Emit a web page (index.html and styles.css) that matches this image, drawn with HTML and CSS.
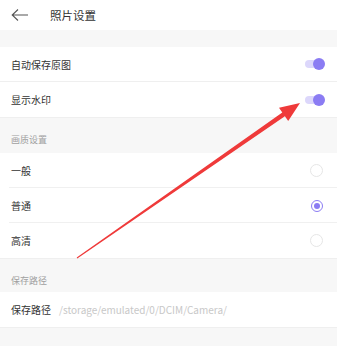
FILE: index.html
```html
<!DOCTYPE html>
<html lang="zh">
<head>
<meta charset="UTF-8">
<meta name="viewport" content="width=device-width, initial-scale=1.0">
<title>照片设置</title>
<link rel="stylesheet" href="styles.css">
</head>
<body>
    <div class="page">
        <div class="header">
            <svg class="back" width="18" height="12" viewBox="0 0 18 12">
                <path d="M17 6 H1 M7 0.5 L1.2 6 L7 11.5" fill="none" stroke="#555" stroke-width="1.1"/>
            </svg>
            <span class="title">照片设置</span>
        </div>
        <div class="gap"></div>
        <div class="group">
            <div class="row line-full">
                <span>自动保存原图</span>
                <span class="toggle"></span>
            </div>
            <div class="row">
                <span>显示水印</span>
                <span class="toggle"></span>
            </div>
        </div>
        <div class="section">画质设置</div>
        <div class="group">
            <div class="row line-inset">
                <span>一般</span>
                <span class="radio"></span>
            </div>
            <div class="row line-inset">
                <span>普通</span>
                <span class="radio checked"></span>
            </div>
            <div class="row">
                <span>高清</span>
                <span class="radio"></span>
            </div>
        </div>
        <div class="section short">保存路径</div>
        <div class="group">
            <div class="row">
                <span>保存路径<span class="path">/storage/emulated/0/DCIM/Camera/</span></span>
            </div>
        </div>
    </div>

    <!-- red annotation arrow -->
    <svg class="arrow" width="346" height="346" viewBox="0 0 346 346">
        <polygon fill="#ef3a3a" points="76.7,257.6 282.3,112.6 279,107.8 300,103 288.2,121 284.9,116.2 77.3,258.4"/>
    </svg>
</body>
</html>
```

FILE: styles.css
```css
/* page */
body {
    margin: 0;
    background-color: #fff;
    font-family: "Noto Sans CJK SC", "Noto Sans", sans-serif;
    color: #333;
}

.page {
    width: 337px;
    height: 346px;
    background-color: #f7f7f7;
}

.header {
    height: 30px;
    background-color: #fff;
    display: flex;
    align-items: center;
}

.back {
    margin-left: 11px;
}

.title {
    margin-left: 21px;
    font-size: 11.5px;
}

.gap {
    height: 17px;
}

.group {
    background-color: #fff;
    border-bottom: 1px solid #efefef;
}

.row {
    height: 35px;
    box-sizing: border-box;
    padding: 0 12px 0 11px;
    display: flex;
    align-items: center;
    justify-content: space-between;
    font-size: 10px;
    position: relative;
}

.line-full {
    border-bottom: 1px solid #efefef;
}

.line-inset::after {
    content: "";
    position: absolute;
    left: 9px;
    right: 0;
    bottom: 0;
    height: 1px;
    background-color: #f0f0f0;
}

.section {
    height: 35px;
    padding: 0 11px 7px;
    box-sizing: border-box;
    display: flex;
    align-items: flex-end;
    font-size: 9px;
    color: #a0a0a0;
}

.section.short {
    height: 33px;
    padding-bottom: 5px;
}

.path {
    margin-left: 8px;
    color: #c8c8c8;
}

/* switch */
.toggle {
    width: 20px;
    height: 12px;
    position: relative;
}

.toggle::before {
    content: "";
    position: absolute;
    left: 0;
    top: 2px;
    width: 16px;
    height: 8px;
    border-radius: 4px;
    background-color: #dcd7fb;
}

.toggle::after {
    content: "";
    position: absolute;
    right: 0;
    top: 0;
    width: 12px;
    height: 12px;
    border-radius: 50%;
    background-color: #8b7cf3;
}

/* radio */
.radio {
    width: 11px;
    height: 11px;
    margin-right: 2px;
    border: 1px solid #e6e6e6;
    border-radius: 50%;
    display: flex;
    align-items: center;
    justify-content: center;
}

.radio.checked {
    border: 1.5px solid #8b7cf3;
    width: 10px;
    height: 10px;
}

.radio.checked::after {
    content: "";
    width: 6px;
    height: 6px;
    border-radius: 50%;
    background-color: #8b7cf3;
}

.arrow {
    position: absolute;
    left: 0;
    top: 0;
}
```
